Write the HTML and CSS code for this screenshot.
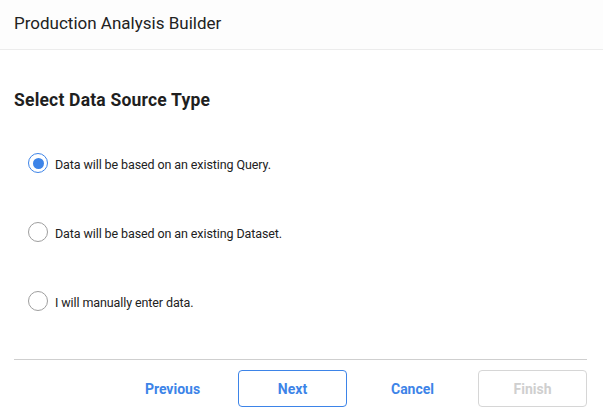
FILE: index.html
```html
<!DOCTYPE html>
<html>
<head>
<meta charset="utf-8">
<link rel="stylesheet" href="styles.css">
</head>
<body>
<div class="dialog">
  <header class="header">
    <h1 class="title">Production Analysis Builder</h1>
  </header>
  <main class="content">
    <h2 class="section-title">Select Data Source Type</h2>
    <div class="options">
      <label class="option"><span class="radio checked"></span><span class="label">Data will be based on an existing Query.</span></label>
      <label class="option"><span class="radio"></span><span class="label">Data will be based on an existing Dataset.</span></label>
      <label class="option"><span class="radio"></span><span class="label">I will manually enter data.</span></label>
    </div>
  </main>
  <footer class="footer">
    <button class="btn btn-link">Previous</button>
    <button class="btn btn-outline">Next</button>
    <button class="btn btn-link">Cancel</button>
    <button class="btn btn-disabled">Finish</button>
  </footer>
</div>
</body>
</html>
```
FILE: styles.css
```css
* { box-sizing: border-box; }
html, body { margin: 0; padding: 0; background: #fff; }
body {
  font-family: "Roboto", "Lato", sans-serif;
  color: #1d1d1f;
  width: 603px;
  height: 415px;
  overflow: hidden;
}
.dialog { display: flex; flex-direction: column; height: 415px; }
.header {
  height: 50px;
  border-bottom: 1px solid #ececec;
  background: #fdfdfd;
  padding: 0 14px;
  display: flex;
  align-items: center;
}
.title {
  margin: 0;
  font-size: 17px;
  font-weight: 400;
  color: #222;
  position: relative;
  top: -2px;
}
.content { padding: 38px 14px 0; flex: 1; }
.section-title {
  margin: 0;
  font-size: 17.5px;
  font-weight: 700;
  color: #1f1f1f;
  line-height: 24px;
  letter-spacing: 0.2px;
}
.options {
  display: flex;
  flex-direction: column;
  gap: 49px;
  padding: 41px 0 0 14px;
}
.option { display: flex; align-items: center; height: 20px; gap: 7px; font-size: 12.5px; color: #222; letter-spacing: -0.1px; }
.label { position: relative; top: 1px; }
.radio {
  width: 20px; height: 20px;
  border-radius: 50%;
  border: 1px solid #9e9e9e;
  display: flex; align-items: center; justify-content: center;
  flex: none;
}
.radio.checked { border: 1.5px solid #3d84e8; }
.radio.checked::after {
  content: "";
  width: 11px; height: 11px;
  border-radius: 50%;
  background: #3d84e8;
}
.footer {
  margin: 0 16px 8px 14px;
  border-top: 1px solid #cfcfcf;
  padding-top: 10px;
  display: flex;
  justify-content: flex-end;
  gap: 11px;
}
.btn {
  width: 109px;
  height: 37px;
  font-family: inherit;
  font-size: 14px;
  font-weight: 700;
  border-radius: 4px;
  background: #fff;
  cursor: pointer;
}
.btn-link { border: 1px solid transparent; color: #3d84e8; }
.btn-outline { border: 1px solid #3d84e8; color: #3d84e8; }
.btn-disabled { border: 1px solid #d6d6d6; color: #cfcfcf; }
```
